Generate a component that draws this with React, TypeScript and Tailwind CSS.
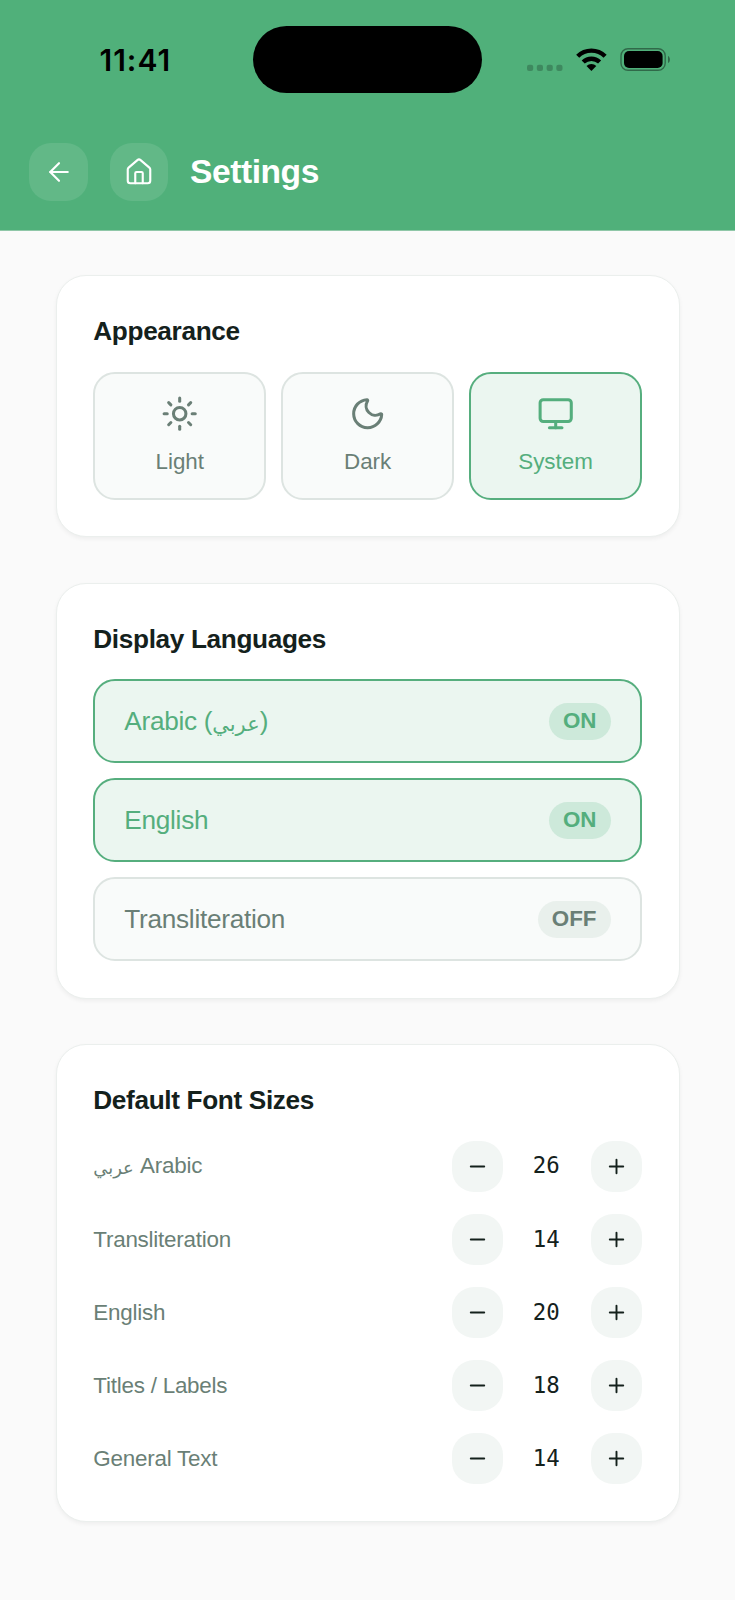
import React from 'react';
import { ArrowLeft, House, Minus, Monitor, Moon, Plus, Sun } from 'lucide-react';

const THEMES = [
    { id: 'light', label: 'Light', icon: Sun, active: false },
    { id: 'dark', label: 'Dark', icon: Moon, active: false },
    { id: 'system', label: 'System', icon: Monitor, active: true },
];

const LANGUAGES = [
    { id: 'arabic', label: 'Arabic', native: 'عربي', on: true },
    { id: 'english', label: 'English', on: true },
    { id: 'transliteration', label: 'Transliteration', on: false },
];

const FONT_SIZES = [
    { id: 'arabic', native: 'عربي', label: 'Arabic', size: 26 },
    { id: 'transliteration', label: 'Transliteration', size: 14 },
    { id: 'english', label: 'English', size: 20 },
    { id: 'titles', label: 'Titles / Labels', size: 18 },
    { id: 'general', label: 'General Text', size: 14 },
];

const Native: React.FC<{ children: React.ReactNode }> = ({ children }) => (
    <span className="align-[-1px] font-['DejaVu_Sans',sans-serif] text-[0.8em] leading-none tracking-normal">{children}</span>
);

const StatusBar: React.FC = () => (
    <div className="flex h-[119px] w-full">
        <div className="w-[253px] pl-[99.5px] pt-[42px] font-['Inter',sans-serif] text-[30px] font-semibold leading-9 tracking-[1px] text-black">11:41</div>
        <div className="mt-[25.5px] h-[67.5px] w-[229px] rounded-full bg-black" />
        <svg className="ml-[45px] mt-[47px] h-[25px] w-[144px]" viewBox="0 0 144 25" fill="none">
            <g fill="#000" fillOpacity="0.22">
                <rect x="0" y="17.7" width="6.2" height="6.3" rx="2" />
                <rect x="9.8" y="17.7" width="6.2" height="6.3" rx="2" />
                <rect x="19.6" y="17.7" width="6.2" height="6.3" rx="2" />
                <rect x="29.3" y="17.7" width="6.2" height="6.3" rx="2" />
            </g>
            <path d="M50.7 9.2a19.6 19.6 0 0 1 27.4 0" stroke="#000" strokeWidth="4.4" />
            <path d="M56.2 15a11.8 11.8 0 0 1 16.4 0" stroke="#000" strokeWidth="4.4" />
            <path d="M64.4 24l-4.9-4.9a7 7 0 0 1 9.8 0z" fill="#000" />
            <rect x="94" y="1.7" width="44.2" height="21.6" rx="7" stroke="#000" strokeOpacity="0.4" strokeWidth="1.4" />
            <rect x="97" y="4" width="38.6" height="17" rx="5" fill="#000" />
            <path d="M141 9v7c2.6-1 2.6-6 0-7z" fill="#000" fillOpacity="0.4" />
        </svg>
    </div>
);

const Header: React.FC = () => (
    <header className="h-[231px] border-b border-[#8fc7a8] bg-[#50b07a]">
        <StatusBar />
        <div className="flex items-center pl-[29px] pt-6 text-white">
            <button className="flex h-[58px] w-[59px] items-center justify-center rounded-[22px] bg-white/10">
                <ArrowLeft size={30} strokeWidth={1.7} />
            </button>
            <button className="ml-[22px] flex size-[58px] items-center justify-center rounded-[22px] bg-white/10">
                <House size={30} strokeWidth={1.7} />
            </button>
            <h1 className="ml-[22px] text-[33.6px] font-bold leading-10 tracking-[-0.45px]">Settings</h1>
        </div>
    </header>
);

const Card: React.FC<{ title: string; className: string; children: React.ReactNode }> = ({ title, className, children }) => (
    <section className={`rounded-[30px] border border-[#ebefed] bg-white pl-[36.3px] pr-[37px] shadow-[0_2px_4px_rgba(0,0,0,0.05)] ${className}`}>
        <h2 className="pt-[39px] text-[26.2px] font-bold leading-8 tracking-[-0.35px] text-[#14211c]">{title}</h2>
        {children}
    </section>
);

const App: React.FC = () => {
    return (
        <div className="min-h-[1600px] w-[735px] bg-[#fafafa] font-['Liberation_Sans',sans-serif]">
            <Header />
            <main className="flex flex-col pl-[56px] pr-[55px] pt-11">
                <Card title="Appearance" className="h-[262px]">
                    <div className="mt-[25px] grid grid-cols-3 gap-[15px]">
                        {THEMES.map(({ id, label, icon: Icon, active }) => (
                            <button
                                key={id}
                                className={`flex h-[127.5px] flex-col items-center rounded-[22px] border-2 pt-[21px] text-[22.4px] leading-7 ${active ? 'border-[#56ae7e] bg-[#ebf6f0] text-[#54ae7d]' : 'border-[#dde4e1] bg-[#f9fbfa] text-[#6a7f76]'}`}
                            >
                                <Icon size={37.4} strokeWidth={1.95} />
                                <span className="mt-4">{label}</span>
                            </button>
                        ))}
                    </div>
                </Card>

                <Card title="Display Languages" className="mt-[46px] h-[416px]">
                    <div className="mt-[24px] flex flex-col gap-[15px]">
                        {LANGUAGES.map((lang) => (
                            <button
                                key={lang.id}
                                className={`flex h-[84px] items-center justify-between rounded-[22px] border-2 pl-[29px] pr-[29.5px] text-[26.2px] tracking-[-0.28px] ${lang.on ? 'border-[#56ae7e] bg-[#ebf6f0] text-[#54ae7d]' : 'border-[#dde4e1] bg-[#f9fbfa] text-[#6a7f76]'}`}
                            >
                                <span className="pt-0.5">
                                    {lang.label}
                                    {lang.native && <> (<Native>{lang.native}</Native>)</>}
                                </span>
                                <span className={`flex h-[37px] items-center rounded-full px-[14px] text-[22.4px] font-bold tracking-normal ${lang.on ? 'bg-[#cde9da]' : 'bg-[#e9f0ec]'}`}>
                                    {lang.on ? 'ON' : 'OFF'}
                                </span>
                            </button>
                        ))}
                    </div>
                </Card>

                <Card title="Default Font Sizes" className="mt-[45px] h-[478px]">
                    <div className="mt-[24.7px] flex flex-col gap-[21.9px]">
                        {FONT_SIZES.map((row) => (
                            <div key={row.id} className="flex h-[51.2px] items-center">
                                <span className="flex-1 text-[22.4px] tracking-[-0.22px] text-[#6a7f76]">
                                    {row.native && <><Native>{row.native}</Native> </>}
                                    {row.label}
                                </span>
                                <button className="flex size-[51.2px] items-center justify-center rounded-[22px] bg-[#f2f6f4] text-[#14211c]">
                                    <Minus size={23} strokeWidth={2} />
                                </button>
                                <span className="w-[87.6px] pr-[1.5px] text-center font-['DejaVu_Sans_Mono',monospace] text-[22.4px] text-[#14211c]">{row.size}</span>
                                <button className="flex size-[51.2px] items-center justify-center rounded-[22px] bg-[#f2f6f4] text-[#14211c]">
                                    <Plus size={23} strokeWidth={2} />
                                </button>
                            </div>
                        ))}
                    </div>
                </Card>
            </main>
        </div>
    );
};

export default App;
